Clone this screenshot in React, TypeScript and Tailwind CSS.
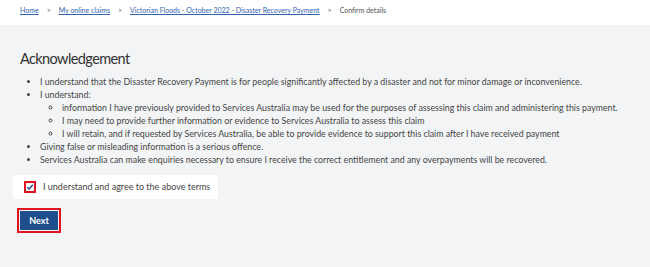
import React from "react";

export default function App() {
  const font = { fontFamily: 'Lato, "Noto Sans", sans-serif' };
  return (
    <div className="w-[650px] h-[267px] bg-[#f3f4f6] text-[#333]" style={font}>
      <div className="h-[25px] bg-white flex items-center pl-[20px] gap-[8px] text-[7px] text-[#555] pb-[4px]">
        <a className="text-[#2f63b0] underline">Home</a>
        <span>&gt;</span>
        <a className="text-[#2f63b0] underline">My online claims</a>
        <span>&gt;</span>
        <a className="text-[#2f63b0] underline">Victorian Floods - October 2022 - Disaster Recovery Payment</a>
        <span>&gt;</span>
        <span>Confirm details</span>
      </div>
      <div className="pl-[20px] pt-[24px]">
        <h1 className="text-[14.5px] tracking-[-0.6px] leading-[20px] text-[#333]">Acknowledgement</h1>
        <ul className="mt-[6px] text-[8.8px] leading-[13px] text-[#444] list-disc pl-[20px]">
          <li>I understand that the Disaster Recovery Payment is for people significantly affected by a disaster and not for minor damage or inconvenience.</li>
          <li>
            I understand:
            <ul className="list-[circle] pl-[22px]">
              <li>information I have previously provided to Services Australia may be used for the purposes of assessing this claim and administering this payment.</li>
              <li>I may need to provide further information or evidence to Services Australia to assess this claim</li>
              <li>I will retain, and if requested by Services Australia, be able to provide evidence to support this claim after I have received payment</li>
            </ul>
          </li>
          <li>Giving false or misleading information is a serious offence.</li>
          <li>Services Australia can make enquiries necessary to ensure I receive the correct entitlement and any overpayments will be recovered.</li>
        </ul>
      </div>
      <div className="ml-[13px] mt-[9px] w-[205px] h-[24px] bg-white rounded-[2px] flex items-center pl-[11px] gap-[7px]">
        <span className="w-[12px] h-[12px] bg-[#e0141e] flex items-center justify-center">
          <span className="w-[8px] h-[8px] bg-white flex items-center justify-center">
            <svg width="8" height="8" viewBox="0 0 8 8"><path d="M1.2 4.2 L3.2 6 L6.8 1.8" stroke="#1f4e8c" strokeWidth="1.5" fill="none" /></svg>
          </span>
        </span>
        <span className="text-[9px] text-[#444]">I understand and agree to the above terms</span>
      </div>
      <div className="ml-[17px] mt-[9px] w-[44px] h-[25px] border-[2px] border-[#e0141e] p-[1px]">
        <div className="w-full h-full bg-[#1f4e8c] text-white text-[9px] font-bold flex items-center justify-center">Next</div>
      </div>
    </div>
  );
}
